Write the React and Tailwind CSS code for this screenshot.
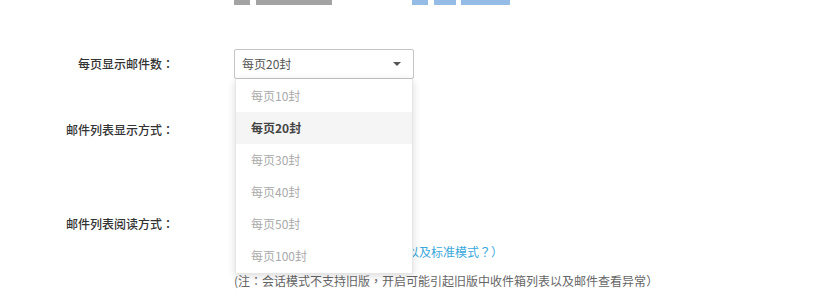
import React from "react";

const items = ["每页10封", "每页20封", "每页30封", "每页40封", "每页50封", "每页100封"];

const P = ({ children }) => (
  <span style={{ fontFamily: '"Noto Sans CJK TC", sans-serif' }}>{children}</span>
);

export default function App() {
  return (
    <div
      className="relative w-[820px] h-[305px] bg-white overflow-hidden text-[12px] text-[#333]"
      style={{ fontFamily: '"Noto Sans CJK SC", "Noto Sans", sans-serif' }}
    >
      {/* top bars */}
      <div className="flex h-[5px] items-start">
        <div className="ml-[234px] w-[16px] h-[5px] bg-[#a3a3a3]" />
        <div className="ml-[6px] w-[76px] h-[5px] bg-[#a3a3a3]" />
        <div className="ml-[80px] w-[16px] h-[5px] bg-[#94bce6]" />
        <div className="ml-[6px] w-[22px] h-[5px] bg-[#94bce6]" />
        <div className="ml-[5px] w-[49px] h-[5px] bg-[#94bce6]" />
      </div>

      {/* row 1 */}
      <div className="flex mt-[44px] items-center h-[30px]">
        <div className="w-[174px] text-right font-medium text-[#333]">每页显示邮件数<P>：</P></div>
        <div className="relative ml-[60px]">
          <div className="w-[180px] h-[30px] border border-[#c4c4c4] rounded-[2px] flex items-center justify-between pl-[7px] pr-[12px] text-[#555]">
            <span>每页20封</span>
            <svg width="8" height="4" viewBox="0 0 8 4">
              <path d="M0 0 L8 0 L4 4 Z" fill="#555" />
            </svg>
          </div>
        </div>
      </div>

      {/* row 2 */}
      <div className="flex mt-[44px] h-[14px] items-center">
        <div className="w-[174px] text-right font-medium">邮件列表显示方式<P>：</P></div>
      </div>

      {/* row 3 */}
      <div className="flex mt-[80px] h-[14px] items-center">
        <div className="w-[174px] text-right font-medium">邮件列表阅读方式<P>：</P></div>
      </div>

      <div className="mt-[14px] pl-[407px] h-[14px] leading-[14px] text-[#3aa8dd]">
        以及标准模式<P>？）</P>
      </div>
      <div className="mt-[15px] pl-[234px] h-[14px] leading-[14px] text-[#666]">
        (注<P>：</P>会话模式不支持旧版<P>，</P>开启可能引起旧版中收件箱列表以及邮件查看异常<P>）</P>
      </div>

      {/* dropdown menu */}
      <div className="absolute left-[235px] top-[79px] w-[178px] bg-white border border-[#e6e6e6] border-t-0 shadow-[0_2px_8px_rgba(0,0,0,0.14)] pt-[1px] pb-[1px]">
        {items.map((t) => (
          <div
            key={t}
            className={
              t === "每页20封"
                ? "h-[32px] flex items-center pl-[15px] bg-[#f5f5f5] text-[#444] font-bold"
                : "h-[32px] flex items-center pl-[15px] text-[#aaa]"
            }
          >
            {t}
          </div>
        ))}
      </div>
    </div>
  );
}
